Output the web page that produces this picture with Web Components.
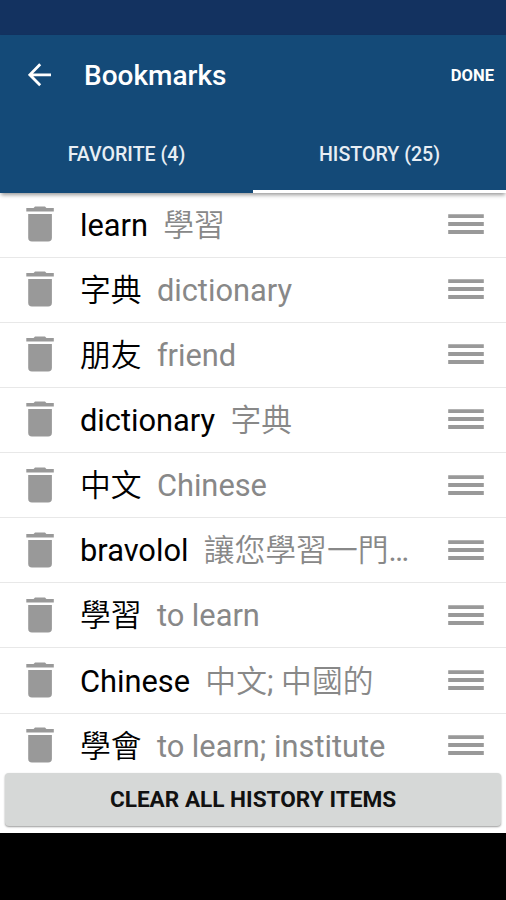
<!DOCTYPE html>
<html lang="en">
<head>
<meta charset="utf-8">
<title>Bookmarks</title>
<style>
  html,
  body {
    margin: 0;
    height: 100%;
    background: #000;
    overflow: hidden;
  }

  body {
    font-family: Roboto, "Noto Sans CJK TC DemiLight", "Noto Sans CJK TC", sans-serif;
  }
</style>
</head>
<body>
<bookmarks-screen></bookmarks-screen>

<script>
const define = (name, html, setup) => {
  const template = document.createElement('template');
  template.innerHTML = html;
  class Component extends HTMLElement {
    constructor() {
      super();
      this.attachShadow({ mode: 'open' });
      this.shadowRoot.appendChild(template.content.cloneNode(true));
    }
    connectedCallback() {
      if (setup) setup(this.shadowRoot);
    }
  }
  window.customElements.define(name, Component);
};

define('app-bar', `
  <style>
  :host {
    display: flex;
    align-items: center;
    box-sizing: border-box;
    height: 80px;
    padding: 0 12px 0 28px;
    color: #fff;
  }

  svg {
    display: block;
    flex-shrink: 0;
  }

  h1 {
    flex: 1;
    margin: 0 0 0 32px;
    padding-top: 2px;
    font-size: 28px;
    font-weight: 500;
    line-height: 34px;
  }

  .action {
    font-size: 16.6px;
    font-weight: 700;
  }
  </style>
  <svg width="24" height="24" viewBox="0 0 24 24" fill="none" stroke="#fff" stroke-width="2.8">
    <path d="M23 11.8H2.5M12.2 1.2L1.8 11.8L12.2 22.2"/>
  </svg>
  <h1><slot></slot></h1>
  <div class="action"><slot name="action"></slot></div>
`);

define('tab-item', `
  <style>
  :host {
    display: flex;
    flex: 1;
    align-items: center;
    justify-content: center;
    box-sizing: border-box;
    height: 77.5px;
    padding-top: 3.5px;
    border-bottom: 3px solid transparent;
    color: #e8eef4;
    font-size: 19.6px;
    font-weight: 500;
  }

  :host([active]) {
    border-color: #fff;
  }
  </style>
  <slot></slot>
`);

define('history-row', `
  <style>
  :host {
    display: flex;
    align-items: center;
    flex-shrink: 0;
    box-sizing: border-box;
    height: 65.15px;
    padding: 0 22px 0 26px;
    border-bottom: 1.5px solid #e8e8e8;
    font-size: 30.8px;
    line-height: 44px;
  }

  svg {
    display: block;
    flex-shrink: 0;
    margin-bottom: 1px;
  }

  .text {
    flex: 1;
    margin: 0 34px 0 26px;
    padding-top: 2px;
    overflow: hidden;
    white-space: pre;
    text-overflow: ellipsis;
    color: #888;
  }

  .word {
    color: #000;
  }
  </style>
  <svg width="28" height="36" viewBox="0 0 28 36" fill="#999">
    <path d="M.3 2H7.6L9 .4H19L20.4 2H27.8V5.6H.3zM2.2 7.9H25.9V31.8Q25.9 35.6 22.1 35.6H6Q2.2 35.6 2.2 31.8z"/>
  </svg>
  <div class="text"><span class="word"><slot name="word"></slot></span>  <slot></slot></div>
  <svg width="36" height="22" viewBox="0 0 36 22" fill="#999">
    <path d="M.2 1.2H35.8V5.1H.2zM.2 9.1H35.8V13H.2zM.2 17H35.8V20.9H.2z"/>
  </svg>
`);

define('raised-button', `
  <style>
  :host {
    display: block;
    padding: 0 5px;
  }

  button {
    display: block;
    width: 100%;
    height: 53px;
    padding: 0 0 1px;
    border: 0;
    border-radius: 4px;
    background: #d6d8d7;
    box-shadow: 0 1px 2px rgba(0, 0, 0, .4);
    color: #111;
    font-family: inherit;
    font-size: 22.6px;
    font-weight: 700;
  }
  </style>
  <button><slot></slot></button>
`);

define('bookmarks-screen', `
  <style>
  :host {
    display: flex;
    flex-direction: column;
    height: 832.5px;
    background: #fff;
    overflow: hidden;
  }

  .status {
    height: 35px;
    flex-shrink: 0;
    background: #133260;
  }

  /* the shadow falls on the list only, not up on the status bar */
  header {
    flex-shrink: 0;
    z-index: 1;
    background: #144a78;
    box-shadow: 0 3px 4px -1px rgba(0, 0, 0, .4);
  }

  nav {
    display: flex;
  }

  .list {
    display: flex;
    flex: 1;
    flex-direction: column;
    min-height: 0;
    overflow: hidden;
  }

  footer {
    flex-shrink: 0;
    height: 59.5px;
    background: #fff;
  }
  </style>
  <div class="status"></div>
  <header>
    <app-bar>Bookmarks<span slot="action">DONE</span></app-bar>
    <nav>
      <tab-item>FAVORITE (4)</tab-item>
      <tab-item active>HISTORY (25)</tab-item>
    </nav>
  </header>
  <div class="list"></div>
  <footer><raised-button>CLEAR ALL HISTORY ITEMS</raised-button></footer>
`, (root) => {
  const items = [
    ['learn', '學習'],
    ['字典', 'dictionary'],
    ['朋友', 'friend'],
    ['dictionary', '字典'],
    ['中文', 'Chinese'],
    ['bravolol', '讓您學習一門…'],
    ['學習', 'to learn'],
    ['Chinese', '中文; 中國的'],
    ['學會', 'to learn; institute'],
  ];
  const list = root.querySelector('.list');
  items.forEach(([word, meaning]) => {
    const row = document.createElement('history-row');
    row.innerHTML = `<span slot="word">${word}</span>${meaning}`;
    list.appendChild(row);
  });
});
</script>
</body>
</html>
